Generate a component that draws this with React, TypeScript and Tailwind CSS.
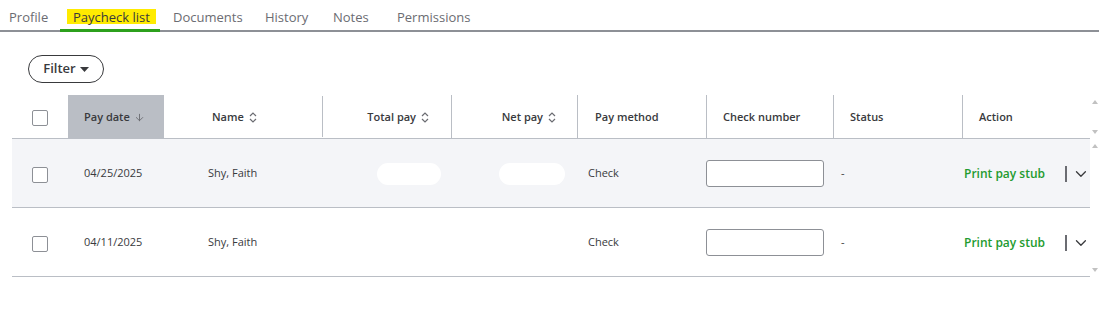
import { ChevronDown, ArrowDown } from "lucide-react"

const tabs = [
    { label: "Profile", w: "w-[60px] pl-[9px]" },
    { label: "Paycheck list", w: "w-[100px] pl-[7px]" },
    { label: "Documents", w: "w-[92px] pl-[13px]" },
    { label: "History", w: "w-[68px] pl-[13px]" },
    { label: "Notes", w: "w-[64px] pl-[13px]" },
    { label: "Permissions", w: "pl-[13px]" },
]

const rows = [
    { date: "04/25/2025", name: "Shy, Faith", blurred: true, shaded: true },
    { date: "04/11/2025", name: "Shy, Faith", blurred: false, shaded: false },
]

const cols = "grid grid-cols-[56px_96px_159px_129px_126px_129px_127px_129px_127px]"

const SortIcon = () => (
    <svg width="8" height="11" viewBox="0 0 8 11" className="ml-[5px] inline-block">
        <path d="M1 4 L4 1 L7 4" fill="none" stroke="#6b6c72" strokeWidth="1.2" />
        <path d="M1 7 L4 10 L7 7" fill="none" stroke="#6b6c72" strokeWidth="1.2" />
    </svg>
)

const Checkbox = () => <div className="w-4 h-4 border border-[#8d9096] rounded-[2px] bg-white" />

const Blob = ({ w }: { w: string }) => (
    <div className={`h-[22px] ${w} rounded-full bg-white`} />
)

const Tri = ({ up }: { up?: boolean }) => (
    <div
        className={`w-0 h-0 border-l-[3px] border-r-[3px] border-transparent ${up ? "border-b-[4px] border-b-[#c1c1c1]" : "border-t-[4px] border-t-[#c1c1c1]"}`}
    />
)

const App = () => {
    return (
        <main className="w-[1099px] h-[327px] bg-white font-['Open_Sans',sans-serif] text-[#393a3d] overflow-hidden">
            {/* Tabs */}
            <nav className="flex h-[32px] border-b-2 border-[#8d9096]">
                {tabs.map((t) => {
                    const active = t.label === "Paycheck list"
                    return (
                        <div
                            key={t.label}
                            className={`relative ${t.w} pt-[8px] text-[13px] whitespace-nowrap ${active ? "text-[#393a3d]" : "text-[#6b6c72]"}`}
                        >
                            {active ? (
                                <span className="bg-[#ffeb00] px-[6px] inline-block leading-[14px] pt-[1px]">{t.label}</span>
                            ) : (
                                <span className="inline-block leading-[14px] pt-[1px]">{t.label}</span>
                            )}
                            {active && <div className="absolute left-0 right-0 -bottom-[2px] h-[3px] bg-[#2ca01c]" />}
                        </div>
                    )
                })}
            </nav>

            {/* Filter */}
            <div className="pl-[28px] pt-[23px]">
                <button className="flex items-center gap-[4px] h-[28px] w-[76px] justify-center rounded-full border border-[#393a3d] text-[13px] font-semibold text-[#393a3d]">
                    Filter
                    <svg width="9" height="5" viewBox="0 0 9 5">
                        <path d="M0 0 L9 0 L4.5 5 Z" fill="#393a3d" />
                    </svg>
                </button>
            </div>

            {/* Table */}
            <div className="flex pl-[12px] mt-[12px]">
                <div className="w-[1078px]">
                    <div className={`${cols} h-[44px] border-b border-[#babec5] text-[11px] font-semibold`}>
                        <div className="flex items-center pl-[20px] pt-[2px]"><Checkbox /></div>
                        <div className="flex items-center pl-[16px] pt-[2px] bg-[#babec5]">
                            Pay date <ArrowDown size={11} strokeWidth={2} className="ml-[4px] text-[#6b6c72]" />
                        </div>
                        <div className="flex items-center pl-[48px] pt-[2px] border-r border-[#babec5] my-[1px]">
                            Name <SortIcon />
                        </div>
                        <div className="flex items-center justify-end pr-[22px] pt-[2px] border-r border-[#babec5]">
                            Total pay <SortIcon />
                        </div>
                        <div className="flex items-center justify-end pr-[21px] pt-[2px] border-r border-[#babec5]">
                            Net pay <SortIcon />
                        </div>
                        <div className="flex items-center pl-[17px] pt-[2px] border-r border-[#babec5]">Pay method</div>
                        <div className="flex items-center pl-[16px] pt-[2px] border-r border-[#babec5]">Check number</div>
                        <div className="flex items-center pl-[16px] pt-[2px] border-r border-[#babec5]">Status</div>
                        <div className="flex items-center pl-[16px] pt-[2px]">Action</div>
                    </div>

                    {rows.map((r, i) => (
                        <div
                            key={i}
                            className={`${cols} h-[69px] border-b border-[#babec5] text-[11px] ${r.shaded ? "bg-[#f4f5f8]" : "bg-white"}`}
                        >
                            <div className="flex items-center pl-[20px] pt-[3px]"><Checkbox /></div>
                            <div className="flex items-center pl-[16px]">{r.date}</div>
                            <div className="flex items-center pl-[44px]">{r.name}</div>
                            <div className="flex items-center pl-[54px] pt-[2px]">{r.blurred && <Blob w="w-[64px]" />}</div>
                            <div className="flex items-center pl-[47px] pt-[2px]">{r.blurred && <Blob w="w-[66px]" />}</div>
                            <div className="flex items-center pl-[10px]">Check</div>
                            <div className="flex items-center -ml-[1px]">
                                <input className="w-[118px] h-[27px] bg-white border border-[#8d9096] rounded-[3px]" />
                            </div>
                            <div className="flex items-center pl-[7px]">-</div>
                            <div className="flex items-center pl-[1px] pt-[2px] whitespace-nowrap">
                                <span className="w-[102px] text-[12px] font-semibold text-[#239b2f]">Print pay stub</span>
                                <div className="w-[2px] h-[16px] bg-[#6b6c72]" />
                                <ChevronDown size={18} strokeWidth={1.75} className="ml-[5px] text-[#393a3d]" />
                            </div>
                        </div>
                    ))}
                </div>

                {/* scroll arrows */}
                <div className="w-[9px] flex flex-col items-center">
                    <div className="h-[44px] flex flex-col justify-between items-center py-[5px]">
                        <Tri up />
                        <Tri />
                    </div>
                    <div className="h-[138px] flex flex-col justify-between items-center py-[5px]">
                        <Tri up />
                        <Tri />
                    </div>
                </div>
            </div>
        </main>
    )
}

export default App
